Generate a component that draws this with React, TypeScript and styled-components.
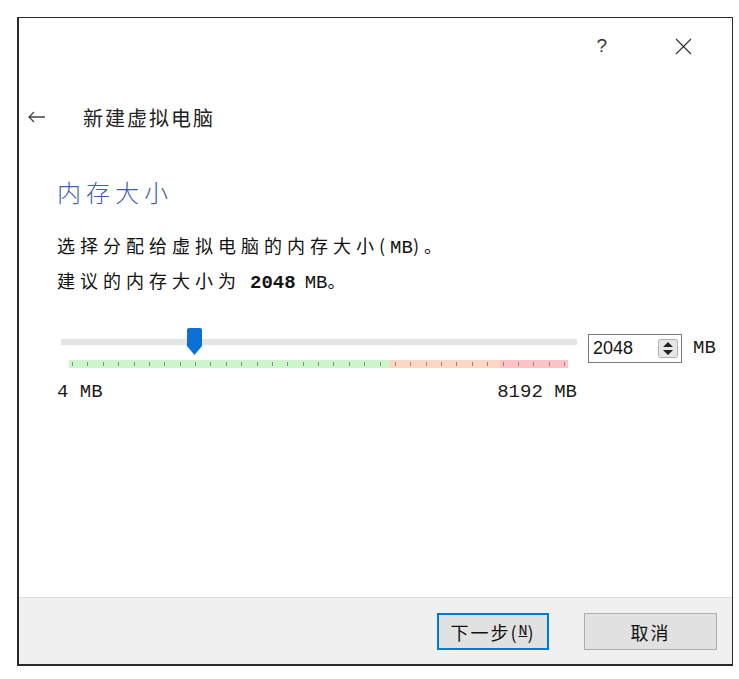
import styled, { createGlobalStyle } from 'styled-components'

const GlobalStyle = createGlobalStyle`
  html, body {
    margin: 0;
    padding: 0;
    background: #ffffff;
  }
  body {
    font-family: "Noto Sans CJK SC", "Noto Sans", sans-serif;
    color: #1a1a1a;
  }
`

const Page = styled.div`
  padding: 17px 0 0 17px;
`

const Window = styled.div`
  width: 716px;
  height: 649px;
  box-sizing: border-box;
  border: 1px solid #2a2a2a;
  border-left-width: 2px;
  border-bottom-width: 2px;
  display: flex;
  flex-direction: column;
  background: #fff;
`

const TitleBar = styled.div`
  height: 56px;
  display: flex;
  justify-content: flex-end;
  align-items: center;
  padding-right: 40px;
  gap: 68px;
`

const Help = styled.span`
  font-family: "Liberation Sans", sans-serif;
  font-size: 19px;
  color: #333;
`

const Header = styled.div`
  height: 86px;
  display: flex;
  align-items: center;
  padding-left: 9px;
  gap: 37px;
`

const HeaderTitle = styled.span`
  font-size: 20px;
  letter-spacing: 2px;
  color: #222;
`

const Content = styled.div`
  flex: 1;
  padding-left: 38px;
  display: flex;
  flex-direction: column;
`

const Heading = styled.div`
  margin-top: 17px;
  height: 30px;
  line-height: 30px;
  font-size: 24px;
  font-weight: 300;
  letter-spacing: 5px;
  color: #3f5fae;
`

const Line = styled.div<{ $top: number }>`
  margin-top: ${(p) => p.$top}px;
  height: 30px;
  line-height: 30px;
  font-size: 18px;
  letter-spacing: 5px;
  color: #111;
  white-space: nowrap;
`

const Mono = styled.span<{ $bold?: boolean }>`
  font-family: "Liberation Mono", monospace;
  font-size: 19px;
  line-height: 20px;
  letter-spacing: 0;
  font-weight: ${(p) => (p.$bold ? 700 : 400)};
`

const SliderRow = styled.div`
  margin-top: 33px;
  display: flex;
  align-items: flex-start;
`

const SliderCol = styled.div`
  width: 516px;
  margin-left: 4px;
  display: flex;
  flex-direction: column;
`

const TrackArea = styled.div`
  position: relative;
  height: 28px;
  display: flex;
  align-items: center;
`

const Track = styled.div`
  width: 100%;
  height: 6px;
  background: #e4e4e4;
  border-radius: 1px;
`

const Thumb = styled.div`
  position: absolute;
  top: 0;
  width: 17px;
  height: 28px;
  margin-left: -8px;
`

const TickBar = styled.div`
  margin: 4px 9px 0 8px;
  height: 8px;
  display: flex;
  position: relative;
`

const Zone = styled.div<{ $color: string; $w: number }>`
  width: ${(p) => p.$w}px;
  background: ${(p) => p.$color};
`

const Ticks = styled.div`
  position: absolute;
  inset: 0 3px;
  display: flex;
  justify-content: space-between;
  align-items: center;
`

const Tick = styled.span`
  width: 1px;
  height: 4px;
  background: #8a8a8a;
`

const Labels = styled.div`
  margin-top: 14px;
  margin-left: -4px;
  display: flex;
  justify-content: space-between;
  line-height: 20px;
`

const SpinBox = styled.div`
  margin-left: 11px;
  margin-top: 6px;
  width: 94px;
  height: 29px;
  box-sizing: border-box;
  border: 1px solid #7a7a7a;
  display: flex;
  align-items: center;
  justify-content: space-between;
  padding: 0 3px 0 4px;
`

const SpinValue = styled.span`
  font-family: "Liberation Sans", sans-serif;
  font-size: 18px;
  color: #111;
`

const SpinUnit = styled(Mono)`
  margin-left: 11px;
  margin-top: 10px;
`

const Footer = styled.div`
  height: 67px;
  box-sizing: border-box;
  border-top: 1px solid #dcdcdc;
  background: #f0f0f0;
  display: flex;
  justify-content: flex-end;
  align-items: flex-start;
  padding: 15px 15px 0 0;
  gap: 35px;
`

const Button = styled.div<{ $primary?: boolean }>`
  width: ${(p) => (p.$primary ? 112 : 133)}px;
  height: 37px;
  box-sizing: border-box;
  background: #e1e1e1;
  border: ${(p) => (p.$primary ? '2px solid #0078d7' : '1px solid #adadad')};
  display: flex;
  align-items: center;
  justify-content: center;
  font-size: 18px;
  letter-spacing: 2px;
  color: #111;
`

const Key = styled.span`
  font-family: "Liberation Mono", monospace;
  font-size: 15px;
  text-decoration: underline;
  letter-spacing: 0;
`

const zones = [
  { color: '#ccf5cc', w: 320 },
  { color: '#fcd7c6', w: 111 },
  { color: '#fbc3c7', w: 68 },
]

const min = 4
const max = 8192
const value = 2048

export default function App() {
  const frac = (value - min) / (max - min)
  const thumbLeft = 8 + frac * 499

  return (
    <Page>
      <GlobalStyle />
      <Window>
        <TitleBar>
          <Help>?</Help>
          <svg width="17" height="17" viewBox="0 0 17 17">
            <path d="M1 1 L16 16 M16 1 L1 16" stroke="#333" strokeWidth="1.2" fill="none" />
          </svg>
        </TitleBar>

        <Header>
          <svg width="18" height="12" viewBox="0 0 18 12">
            <path d="M1 6 H17 M6 1 L1 6 L6 11" stroke="#444" strokeWidth="1.3" fill="none" />
          </svg>
          <HeaderTitle>新建虚拟电脑</HeaderTitle>
        </Header>

        <Content>
          <Heading>内存大小</Heading>
          <Line $top={23}>
            选择分配给虚拟电脑的内存大小(<Mono>MB</Mono>)。
          </Line>
          <Line $top={5}>
            建议的内存大小为 <Mono $bold>2048</Mono> <Mono>MB</Mono>。
          </Line>

          <SliderRow>
            <SliderCol>
              <TrackArea>
                <Track />
                <Thumb style={{ left: thumbLeft }}>
                  <svg width="17" height="28" viewBox="0 0 17 28">
                    <path d="M1 2 Q1 0 3 0 H14 Q16 0 16 2 V18 L8.5 27 L1 18 Z" fill="#0b6fd6" />
                  </svg>
                </Thumb>
              </TrackArea>
              <TickBar>
                {zones.map((z) => (
                  <Zone key={z.color} $color={z.color} $w={z.w} />
                ))}
                <Ticks>
                  {Array.from({ length: 33 }).map((_, i) => (
                    <Tick key={i} />
                  ))}
                </Ticks>
              </TickBar>
              <Labels>
                <Mono>4 MB</Mono>
                <Mono>8192 MB</Mono>
              </Labels>
            </SliderCol>

            <SpinBox>
              <SpinValue>2048</SpinValue>
              <svg width="20" height="19" viewBox="0 0 20 19">
                <rect x="0.5" y="0.5" width="19" height="18" rx="2" fill="#e6e6e6" stroke="#b0b0b0" />
                <path d="M10 3 L15 8 H5 Z M10 16 L15 11 H5 Z" fill="#222" />
              </svg>
            </SpinBox>
            <SpinUnit>MB</SpinUnit>
          </SliderRow>
        </Content>

        <Footer>
          <Button $primary>
            下一步(<Key>N</Key>)
          </Button>
          <Button>取消</Button>
        </Footer>
      </Window>
    </Page>
  )
}
